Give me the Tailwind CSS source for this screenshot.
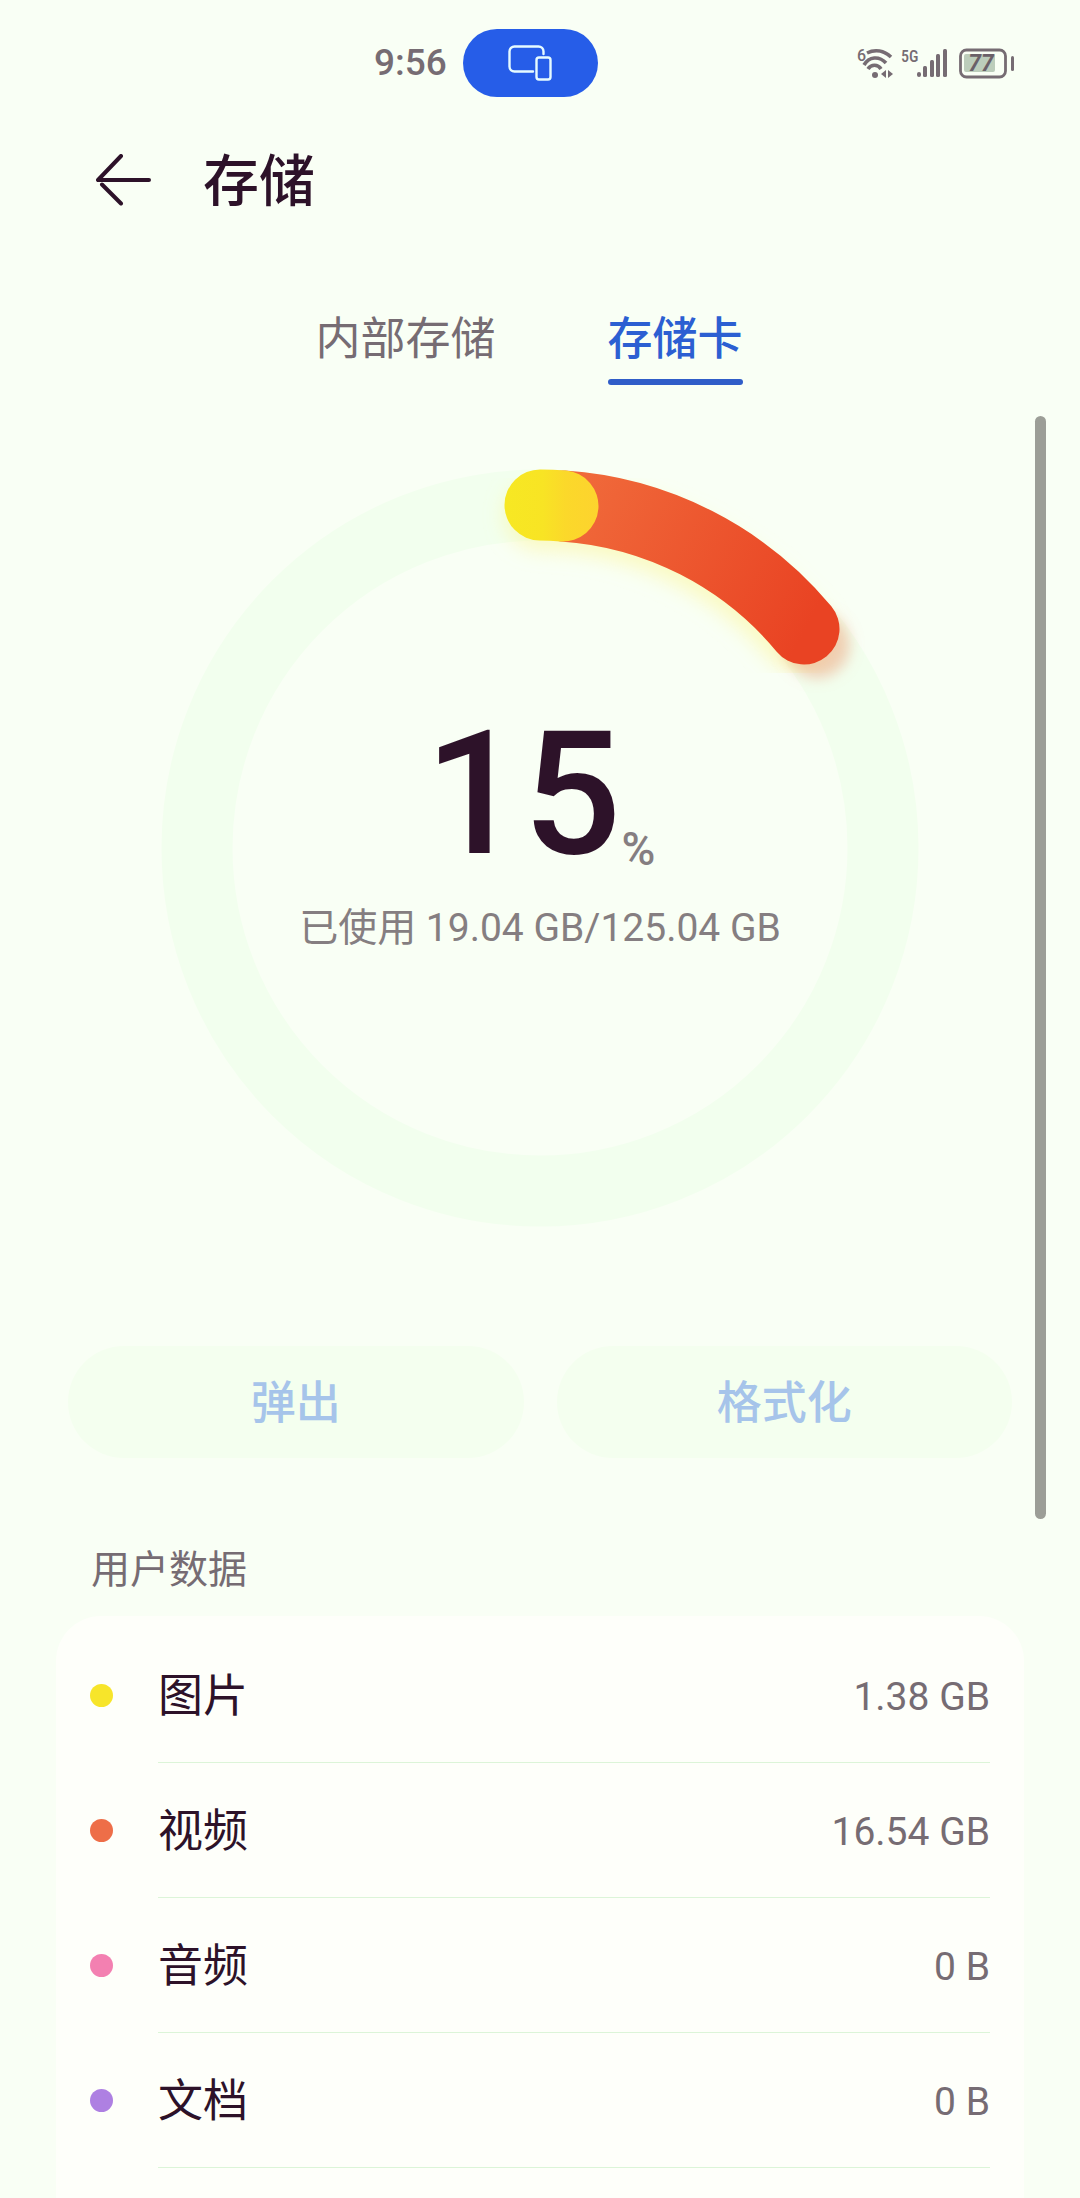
<!DOCTYPE html>
<html lang="zh-CN">
<head>
<meta charset="utf-8">
<meta name="viewport" content="width=device-width, initial-scale=1">
<title>存储</title>
<script src="https://cdn.jsdelivr.net/npm/@tailwindcss/browser@4"></script>
</head>
<body class="relative flex min-h-screen flex-col bg-[#f9fff5] font-['Roboto','Noto_Sans_CJK_SC',sans-serif] text-[#2d1229]">

  <!-- Status bar -->
  <div class="flex h-[126px] items-center justify-between pl-[374px] pr-[66px]">
    <div class="flex items-center gap-4">
      <span class="text-[37px] leading-[48px] font-medium text-[#766c73]">9:56</span>
      <span class="flex h-[68px] w-[135px] items-center justify-center rounded-full bg-[#265de8]">
        <svg class="h-9 w-11" viewBox="0 0 44 36" fill="none" stroke="#e6fbff" stroke-width="2.4" stroke-linecap="round" aria-hidden="true">
          <path d="M25 26.5H6.5a5 5 0 0 1-5-5v-15a5 5 0 0 1 5-5h24a5 5 0 0 1 5 5V9"/>
          <rect x="28.5" y="12.5" width="14" height="22" rx="2.5"/>
        </svg>
      </span>
    </div>
    <svg class="h-8 w-[157px]" viewBox="0 0 157 32" aria-hidden="true">
      <g fill="#766c73" font-family="Roboto, sans-serif">
        <text x="0" y="14" font-size="16" font-weight="500">6</text>
        <text x="44" y="15" font-size="16" font-weight="500" font-family="Roboto Condensed, Roboto, sans-serif">5G</text>
        <circle cx="18" cy="28" r="3"/>
        <path d="M24 27l5-4v8zM36 27l-5-4v8z"/>
        <rect x="60" y="25" width="4" height="5" rx="2"/>
        <rect x="66" y="19" width="4" height="11" rx="1.5"/>
        <rect x="73" y="13" width="4" height="17" rx="1.5"/>
        <rect x="79" y="7" width="4" height="23" rx="1.5"/>
        <rect x="86" y="2" width="4" height="28" rx="1.5"/>
        <rect x="107" y="7" width="31" height="18" rx="2" fill="#bccdbb"/>
        <text x="124" y="24" font-size="23" font-weight="700" font-style="italic" text-anchor="middle" fill="#6a6068">77</text>
        <rect x="154" y="9" width="3" height="15" rx="1.5"/>
      </g>
      <g fill="none" stroke="#766c73" stroke-width="3.6">
        <path d="M10 6c8-4 17-2.500 24 4"/>
        <path d="M7 18c5-8.500 15-9.500 22-2"/>
        <path d="M11 22c3-5 10-5 13 0"/>
        <rect x="103.500" y="3" width="45" height="27" rx="6" stroke-width="2.800"/>
      </g>
    </svg>
  </div>

  <!-- Title bar -->
  <header class="flex h-[108px] items-center gap-[51px] pl-[96px]">
    <button type="button" aria-label="返回">
      <svg class="h-[52px] w-14" viewBox="0 0 56 52" fill="none" stroke="#2d1229" stroke-width="4" stroke-linecap="round" stroke-linejoin="round" aria-hidden="true">
        <path d="M25 2L2 26h51M6 30.500L25 49.500"/>
      </svg>
    </button>
    <h1 class="pt-1 text-[56px] leading-[80px] font-medium">存储</h1>
  </header>

  <main class="flex grow flex-col">
    <nav class="mt-[73px] flex justify-center gap-[112px] pr-[22px] text-[45px] leading-[66px]">
      <a href="#internal" class="text-[#766c73]">内部存储</a>
      <a href="#card" aria-current="page" class="flex flex-col gap-[6px] text-[#2c5fd2]">
        <span class="font-medium">存储卡</span>
        <span class="h-[6px] rounded-full bg-[#305dc8]"></span>
      </a>
    </nav>

    <!-- Usage ring -->
    <section class="relative mx-auto mt-[84px] w-[758px] max-w-full">
      <svg class="block w-full overflow-visible" viewBox="0 0 758 758" fill="none" stroke-width="71" aria-hidden="true">
        <defs>
          <linearGradient id="video" gradientUnits="userSpaceOnUse" x1="410" y1="35" x2="645" y2="160">
            <stop offset="0" stop-color="#f0693a"/>
            <stop offset="1" stop-color="#e94323"/>
          </linearGradient>
          <linearGradient id="image" gradientUnits="userSpaceOnUse" x1="344" y1="0" x2="438" y2="0">
            <stop offset="0" stop-color="#f7e823"/>
            <stop offset="0.4" stop-color="#f8e424"/>
            <stop offset="0.65" stop-color="#fbd82a"/>
            <stop offset="1" stop-color="#fdd32e"/>
          </linearGradient>
          <filter id="soft" x="-30%" y="-30%" width="160%" height="160%"><feGaussianBlur stdDeviation="10"/></filter>
          <filter id="softEnd" filterUnits="userSpaceOnUse" x="560" y="80" width="200" height="220"><feGaussianBlur stdDeviation="7"/></filter>
        </defs>
        <circle cx="379" cy="379" r="343" stroke="#f2ffee"/>
        <path d="M379 46A343 343 0 0 1 636 167" stroke="#fbf7a0" stroke-opacity="0.6" stroke-linecap="round" filter="url(#soft)"/>
        <circle cx="656" cy="176" r="33" fill="#ee9f80" fill-opacity="0.5" filter="url(#softEnd)"/>
        <path d="M402 37A343 343 0 0 1 643 160" stroke="url(#video)" stroke-linecap="round"/>
        <path d="M379 36A343 343 0 0 1 402 37" stroke="url(#image)" stroke-linecap="round"/>
      </svg>
      <div class="absolute inset-0 flex flex-col items-center pt-[239px]">
        <p class="flex items-end">
          <span class="text-[173px] leading-none font-medium">15</span>
          <span class="text-[46px] leading-[64px] font-medium text-[#857e81]">%</span>
        </p>
        <p class="mt-[23px] text-[39px] leading-[48px] whitespace-nowrap text-[#857e81]">已使用 19.04 GB/125.04 GB</p>
      </div>
    </section>

    <div class="mt-[119px] grid grid-cols-2 gap-[33px] pl-[68px] pr-[68px] text-[45px] font-medium text-[#a6c4ea]">
      <button type="button" disabled class="h-[112px] rounded-full bg-[#f4ffef] pt-1">弹出</button>
      <button type="button" disabled class="h-[112px] rounded-full bg-[#f4ffef] pt-1">格式化</button>
    </div>

    <h2 class="mt-[88px] px-[91px] text-[39px] leading-[48px] text-[#766c73]">用户数据</h2>

    <ul class="mx-[56px] mt-[22px] grow rounded-t-[45px] bg-[#fefffa] pt-3 pr-[34px] pl-[34px]">
      <li class="flex items-center">
        <span class="size-[23px] rounded-full bg-[#f7e52a]"></span>
        <div class="ml-[45px] flex h-[135px] grow items-center justify-between border-b border-[#dcf5d8] pt-1">
          <span class="text-[45px]">图片</span><span class="text-[39px] text-[#766c73]">1.38 GB</span>
        </div>
      </li>
      <li class="flex items-center">
        <span class="size-[23px] rounded-full bg-[#ee6e48]"></span>
        <div class="ml-[45px] flex h-[135px] grow items-center justify-between border-b border-[#dcf5d8] pt-1">
          <span class="text-[45px]">视频</span><span class="text-[39px] text-[#766c73]">16.54 GB</span>
        </div>
      </li>
      <li class="flex items-center">
        <span class="size-[23px] rounded-full bg-[#f380b1]"></span>
        <div class="ml-[45px] flex h-[135px] grow items-center justify-between border-b border-[#dcf5d8] pt-1">
          <span class="text-[45px]">音频</span><span class="text-[39px] text-[#766c73]">0 B</span>
        </div>
      </li>
      <li class="flex items-center">
        <span class="size-[23px] rounded-full bg-[#ae80e2]"></span>
        <div class="ml-[45px] flex h-[135px] grow items-center justify-between border-b border-[#dcf5d8] pt-1">
          <span class="text-[45px]">文档</span><span class="text-[39px] text-[#766c73]">0 B</span>
        </div>
      </li>
    </ul>
  </main>

  <!-- Scroll indicator over the content -->
  <div class="absolute top-[416px] right-[34px] h-[1103px] w-[11px] rounded-full bg-[#9c9e97]"></div>
</body>
</html>
